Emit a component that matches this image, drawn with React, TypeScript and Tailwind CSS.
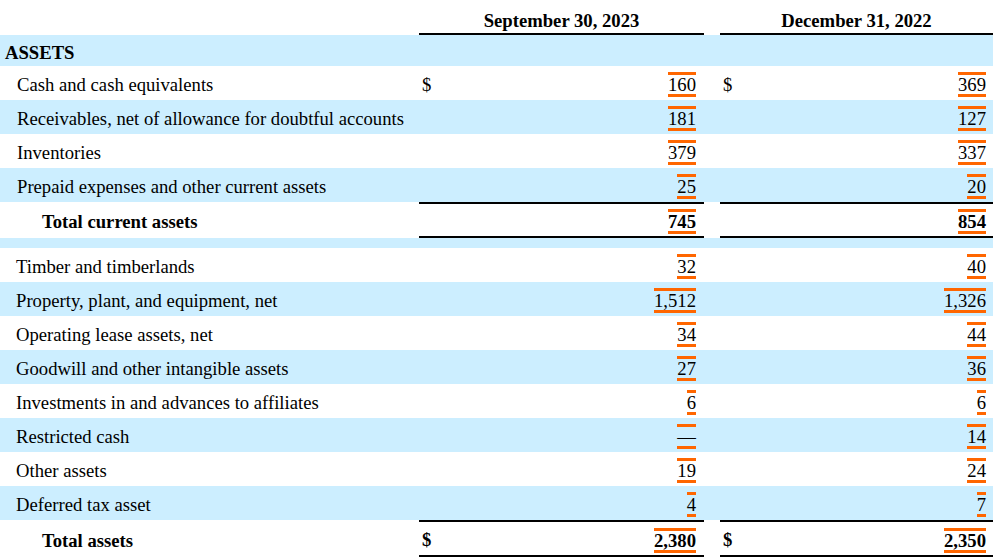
import clsx from "clsx";

type Row = {
  label: string;
  sep?: string;
  dec?: string;
  kind?: "section" | "item" | "total" | "spacer" | "grand";
  indent?: "sm" | "md";
  dollar?: boolean;
};

const rows: Row[] = [
  { label: "ASSETS", kind: "section" },
  { label: "Cash and cash equivalents", sep: "160", dec: "369", indent: "md", dollar: true },
  { label: "Receivables, net of allowance for doubtful accounts", sep: "181", dec: "127", indent: "md" },
  { label: "Inventories", sep: "379", dec: "337", indent: "md" },
  { label: "Prepaid expenses and other current assets", sep: "25", dec: "20", indent: "md" },
  { label: "Total current assets", sep: "745", dec: "854", kind: "total" },
  { label: "", kind: "spacer" },
  { label: "Timber and timberlands", sep: "32", dec: "40" },
  { label: "Property, plant, and equipment, net", sep: "1,512", dec: "1,326" },
  { label: "Operating lease assets, net", sep: "34", dec: "44" },
  { label: "Goodwill and other intangible assets", sep: "27", dec: "36" },
  { label: "Investments in and advances to affiliates", sep: "6", dec: "6" },
  { label: "Restricted cash", sep: "—", dec: "14" },
  { label: "Other assets", sep: "19", dec: "24" },
  { label: "Deferred tax asset", sep: "4", dec: "7" },
  { label: "Total assets", sep: "2,380", dec: "2,350", kind: "grand", dollar: true },
];

const Num = ({ value, bold }: { value: string; bold?: boolean }) => (
  <span
    className={clsx(
      "inline-block leading-[19px] border-y-[3px] border-[#ff6600]",
      bold && "font-bold",
    )}
  >
    {value}
  </span>
);

export default function App() {
  return (
    <div
      className="w-[993px] h-[557px] overflow-hidden bg-white text-[18.67px] text-black"
      style={{ fontFamily: '"Liberation Serif", "Times New Roman", serif' }}
    >
      {/* header */}
      <div className="grid grid-cols-[419px_285px_16px_273px] h-[35px]">
        <div />
        <div className="border-b-2 border-black flex items-end justify-center pb-[2px] leading-none font-bold">
          September 30, 2023
        </div>
        <div />
        <div className="border-b-2 border-black flex items-end justify-center pb-[2px] leading-none font-bold">
          December 31, 2022
        </div>
      </div>

      {rows.map((row, i) => {
        const blue = i % 2 === 0;
        const isTotal = row.kind === "total" || row.kind === "grand";

        if (row.kind === "section") {
          return (
            <div key={i} className="h-[31px] bg-[#cceeff] flex items-center pl-[5px] pt-[4px] font-bold">
              {row.label}
            </div>
          );
        }

        if (row.kind === "spacer") {
          return <div key={i} className="h-[10px] bg-[#cceeff]" />;
        }

        return (
          <div
            key={i}
            className={clsx(
              "grid grid-cols-[419px_285px_16px_273px]",
              row.kind === "grand" ? "h-[37px]" : isTotal ? "h-[36px]" : "h-[34px]",
              blue && !isTotal ? "bg-[#cceeff]" : "bg-white",
            )}
          >
            <div
              className={clsx(
                "flex items-center whitespace-nowrap pt-[4px]",
                isTotal ? "pl-[42px] font-bold" : row.indent === "md" ? "pl-[17px]" : "pl-[16px]",
              )}
            >
              {row.label}
            </div>
            <div
              className={clsx(
                "flex items-center justify-between pl-[3px] pr-[8px] pt-[3px]",
                isTotal && "border-y-2 border-black",
              )}
            >
              <span className={clsx(row.kind === "grand" && "font-bold")}>
                {row.dollar ? "$" : ""}
              </span>
              <Num value={row.sep ?? ""} bold={isTotal} />
            </div>
            <div />
            <div
              className={clsx(
                "flex items-center justify-between pl-[3px] pr-[7px] pt-[3px]",
                isTotal && "border-y-2 border-black",
              )}
            >
              <span className={clsx(row.kind === "grand" && "font-bold")}>
                {row.dollar ? "$" : ""}
              </span>
              <Num value={row.dec ?? ""} bold={isTotal} />
            </div>
          </div>
        );
      })}
    </div>
  );
}
